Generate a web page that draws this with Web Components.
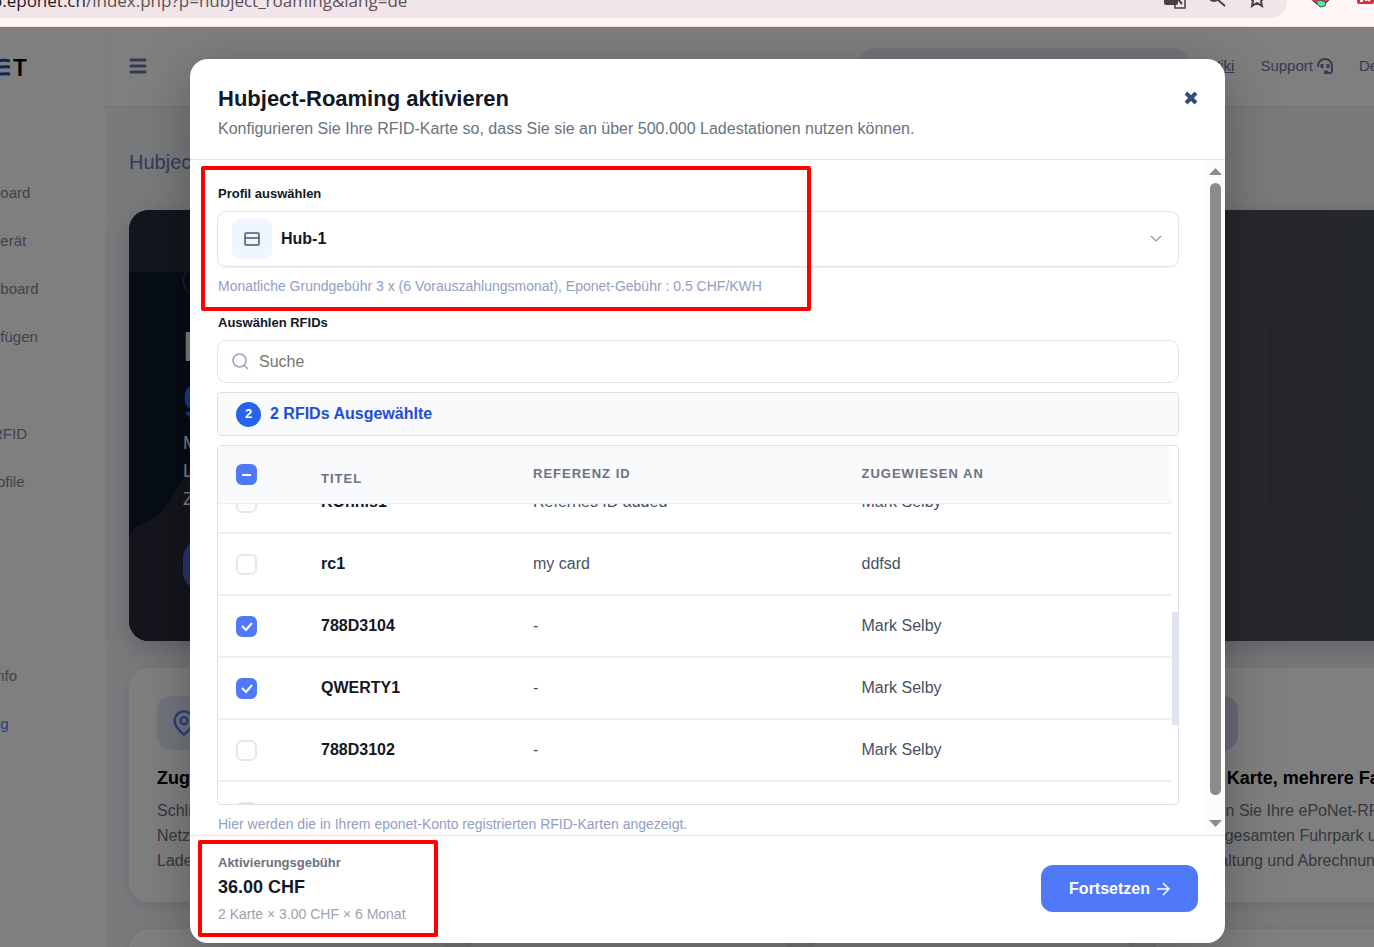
<!DOCTYPE html>
<html lang="de">
<head>
<meta charset="UTF-8">
<meta name="viewport" content="width=device-width, initial-scale=1">
<title>Hubject-Roaming</title>
<style>
  :root {
    --color-blue: #4f79f8;
    --color-ink: #111827;
    --color-grey: #6b7280;
    --color-hint: #929ec3;
    --color-line: #dfe2ea;
  }

  body {
    margin: 0;
    height: 100vh;
    overflow: hidden;
    display: flex;
    flex-direction: column;
    font-family: "Liberation Sans", Arial, sans-serif;
    color: var(--color-ink);
  }
</style>
</head>
<body>
<browser-bar></browser-bar>
<app-shell>
  <app-sidebar slot="sidebar"></app-sidebar>
  <app-topbar slot="topbar"></app-topbar>
  <hero-banner slot="hero"></hero-banner>
  <feature-card slot="cards">
    <svg slot="icon" width="28" height="28" viewBox="0 0 24 24" fill="none" stroke="#4f79f8" stroke-width="2"><path d="M20 10c0 6-8 12-8 12s-8-6-8-12a8 8 0 0 1 16 0z"/><circle cx="12" cy="10" r="3"/></svg>
    <span slot="title">Zug</span>
    Schli<br>Netz<br>Lade
  </feature-card>
  <feature-card slot="cards"></feature-card>
  <feature-card slot="cards"></feature-card>
  <feature-card slot="cards" tint="violet">
    <span slot="title">Eine Karte, mehrere Fahrzeuge</span>
    Nutzen Sie Ihre ePoNet-RFID<br>Ihren gesamten Fuhrpark und<br>Verwaltung und Abrechnung
  </feature-card>
  <feature-card slot="cards"></feature-card>
  <feature-card slot="cards"></feature-card>
  <feature-card slot="cards"></feature-card>
  <feature-card slot="cards"></feature-card>

  <roaming-modal slot="modal">
    <h2 slot="title">Hubject-Roaming aktivieren</h2>
    <p slot="subtitle">Konfigurieren Sie Ihre RFID-Karte so, dass Sie sie an über 500.000 Ladestationen nutzen können.</p>
    <profile-select></profile-select>
    <rfid-picker></rfid-picker>
    <activation-fee slot="footer"></activation-fee>
  </roaming-modal>
</app-shell>

<script>
// Attaches an open shadow root filled from a template string
class BaseElement extends HTMLElement {
  constructor() {
    super();
    const template = document.createElement('template');
    template.innerHTML = `<style>*, ::before { box-sizing: border-box; } h1, h2, h3, p { margin: 0; } :host { display: block; }</style>` + this.constructor.html;
    this.attachShadow({ mode: 'open' });
    this.shadowRoot.appendChild(template.content.cloneNode(true));
  }
}

class BrowserBar extends BaseElement {
  static html = `
    <style>
      :host {
        height: 27px;
        flex: none;
        overflow: hidden;
        display: flex;
        align-items: flex-end;
        background: #fff6f5;
        border-bottom: 1px solid #f3d9dd;
        box-sizing: border-box;
      }
      .address {
        flex: 1;
        height: 34px;
        margin: 0 24px 8px -8px;
        padding-right: 21px;
        display: flex;
        align-items: center;
        gap: 22px;
        border-radius: 0 17px 17px 0;
        background: #f2e5e9;
      }
      .url {
        flex: 1;
        font: 17px/24px "Open Sans", "Noto Sans", sans-serif;
        color: #5c5054;
        white-space: nowrap;
      }
      .url b {
        font-weight: normal;
        color: #1f1a1c;
      }
      .extensions {
        height: 34px;
        margin-bottom: 8px;
        display: flex;
        align-items: center;
        gap: 26px;
      }
      svg {
        margin-bottom: 5px;
      }
    </style>
    <div class="address">
      <span class="url"><b>o.eponet.ch</b>/index.php?p=hubject_roaming&amp;lang=de</span>
      <svg width="22" height="20" viewBox="0 0 22 20"><rect x="0" y="3" width="14" height="13" rx="2" fill="#4a3f43"/><path d="M12 7h9v12h-10v-3" fill="none" stroke="#4a3f43" stroke-width="1.500"/><path d="M13 9l5 6" stroke="#4a3f43" stroke-width="2"/></svg>
      <svg width="18" height="18" viewBox="0 0 18 18" fill="none" stroke="#4a3f43" stroke-width="2"><circle cx="6" cy="6" r="5"/><path d="M10 10l7 6"/></svg>
      <svg width="18" height="18" viewBox="0 0 18 18" fill="none" stroke="#4a3f43" stroke-width="2"><path d="M9 1l2 5 6 1-4 4 1 5-5-3-5 3 1-5-4-4 6-1z"/></svg>
    </div>
    <div class="extensions">
      <svg width="20" height="18" viewBox="0 0 20 18"><path d="M1 1h17v9l-4 4h-8l-4-3z" fill="#f8315d" stroke="#4a3030"/><path d="M5 12l4-2 6 2-1 4-5 1z" fill="#5fe3a8" stroke="#2c5a48"/></svg>
      <svg width="17" height="18" viewBox="0 0 17 18"><rect y="0" width="17" height="14" rx="2" fill="#e52b3f"/><path d="M4 4v7h2M9 4v7M13 6l-3 3 3 2" stroke="#fff" stroke-width="2" fill="none"/></svg>
    </div>
  `;
}

class AppShell extends BaseElement {
  static html = `
    <style>
      :host {
        flex: 1;
        min-height: 0;
        display: grid;
        grid-template: 79px minmax(0, 1fr) / 105px minmax(0, 1fr);
        position: relative;
        overflow: hidden;
        background: #f1f4f8;
      }
      .sidebar {
        grid-row: 1 / 3;
        background: #fff;
      }
      .topbar {
        background: #fff;
        box-shadow: 0 1px 2px rgba(60, 70, 100, 0.08);
      }
      /* the content runs on past the right edge of the window */
      main {
        width: calc(100% + 121px);
        padding: 42px 24px 0;
      }
      h1 {
        margin: 0 0 34px;
        font-size: 20px;
        line-height: 28px;
        font-weight: normal;
        color: #6577b4;
      }
      .cards {
        display: grid;
        grid-template-columns: repeat(4, minmax(0, 1fr));
        gap: 27px;
        margin-top: 27px;
      }
      .overlay {
        position: absolute;
        inset: 0;
        padding: 32px 149px 4px 190px;
        display: flex;
        background: rgba(0, 0, 0, 0.5);
      }
      ::slotted(roaming-modal) {
        flex: 1;
        min-width: 0;
      }
    </style>
    <div class="sidebar"><slot name="sidebar"></slot></div>
    <div class="topbar"><slot name="topbar"></slot></div>
    <main>
      <h1>Hubject</h1>
      <slot name="hero"></slot>
      <div class="cards"><slot name="cards"></slot></div>
    </main>
    <div class="overlay"><slot name="modal"></slot></div>
  `;
}

class AppSidebar extends BaseElement {
  static html = `
    <style>
      :host {
        overflow: hidden;
      }
      .logo {
        height: 79px;
        margin-left: -8px;
        display: flex;
        align-items: center;
        gap: 3px;
        font: bold 23px/24px Lato, sans-serif;
        color: #000;
      }
      nav {
        margin: 63px 0 0 -8px;
      }
      ul {
        list-style: none;
        margin: 0 0 49px;
        padding: 0;
      }
      ul.wide {
        margin-bottom: 146px;
      }
      a {
        display: block;
        font-size: 15px;
        line-height: 48px;
        white-space: pre;
        text-decoration: none;
        color: #78869f;
      }
      a.active {
        color: #4f79f8;
      }
    </style>
    <div class="logo">
      <svg width="18" height="18" viewBox="0 0 18 18" fill="none" stroke="#1f4fae" stroke-width="3"><path d="M0 2c6 2 12-1 18 1M0 9c6 1 12-1 18 0M0 16c6 1 12-1 18 0"/></svg>
      <span>T</span>
    </div>
    <nav>
      <ul>
        <li><a href="#">board</a></li>
        <li><a href="#">gerät</a></li>
        <li><a href="#">&nbsp;&nbsp;board</a></li>
        <li><a href="#">ufügen</a></li>
      </ul>
      <ul class="wide">
        <li><a href="#">RFID</a></li>
        <li><a href="#">rofile</a></li>
      </ul>
      <ul>
        <li><a href="#">Info</a></li>
        <li><a href="#" class="active">ng</a></li>
      </ul>
    </nav>
  `;
}

class AppTopbar extends BaseElement {
  static html = `
    <style>
      :host {
        width: calc(100% + 40px);
        height: 79px;
        padding: 0 0 2px 24px;
        box-sizing: border-box;
        display: flex;
        align-items: center;
        gap: 26px;
        font-size: 15px;
        line-height: 20px;
      }
      button {
        padding: 0;
        border: 0;
        background: none;
        display: flex;
      }
      .search {
        width: 332px;
        height: 36px;
        margin: 0 -10px 0 auto;
        border-radius: 18px;
        background: #e9edf7;
      }
      a {
        color: #6b76a0;
        display: flex;
        align-items: center;
        gap: 4px;
        text-decoration: none;
      }
      a.wiki {
        text-decoration: underline;
      }
    </style>
    <button aria-label="Menü">
      <svg width="18" height="18" viewBox="0 0 18 18" stroke="#6576a6" stroke-width="3" stroke-linecap="round"><path d="M2 3h14M2 9h14M2 15h14"/></svg>
    </button>
    <div class="search"></div>
    <a class="wiki" href="#">Wiki</a>
    <a href="#">Support
      <svg width="16" height="16" viewBox="0 0 16 16" fill="none" stroke="#6b76a0" stroke-width="2"><path d="M1 9V8a7 7 0 0 1 14 0v5a2 2 0 0 1-2 2H8"/><path d="M5 6v4M11 6v4" stroke-width="3"/><path d="M7 14h4" stroke-width="3"/></svg></a>
    <a href="#">Deutsch</a>
  `;
}

class HeroBanner extends BaseElement {
  static html = `
    <style>
      :host {
        display: grid;
        border-radius: 20px;
        overflow: hidden;
        background: linear-gradient(90deg, #0f1a2c, #0f1a2c 25%, #484d58 85%, #4a4f5a);
        color: #fff;
        box-shadow: 0 8px 24px rgba(15, 23, 42, 0.2);
      }
      .scene, .copy {
        grid-area: 1 / 1;
      }
      .scene {
        width: 100%;
        height: 100%;
      }
      .copy {
        padding: 54px 54px 51px;
      }
      .pill {
        width: 200px;
        height: 34px;
        border: 1px solid #46506a;
        border-radius: 17px;
      }
      h2 {
        margin: 25px 0 10px;
        font-size: 42px;
        line-height: 48px;
      }
      h2 span {
        color: #3b76f6;
      }
      p {
        font-size: 18px;
        line-height: 28px;
      }
      .action {
        width: 200px;
        height: 50px;
        margin-top: 27px;
        border-radius: 18px;
        background: #4f69df;
      }
    </style>
    <svg class="scene" viewBox="0 0 1342 431" preserveAspectRatio="none">
      <path d="M0 0h400v62H0z" fill="#252c3c"/>
      <path d="M0 431V326l5-8 22-11q12-10 32-47h200v171z" fill="#2a2d3a"/>
      <path d="M1096 0h46l-6 431h-40z" fill="#4d5158"/>
    </svg>
    <div class="copy">
      <div class="pill"></div>
      <h2>E<br><span>g</span></h2>
      <p>M<br>L<br>Z</p>
      <div class="action"></div>
    </div>
  `;
}

class FeatureCard extends BaseElement {
  static html = `
    <style>
      :host {
        min-height: 234px;
        padding: 28px;
        box-sizing: border-box;
        border-radius: 20px;
        background: #fff;
        box-shadow: 0 3px 12px rgba(30, 40, 80, 0.1);
        white-space: nowrap;
      }
      .tile {
        width: 54px;
        height: 54px;
        display: grid;
        place-items: center;
        border-radius: 14px;
        background: #e7ebfb;
      }
      :host([tint="violet"]) .tile {
        background: #d9d3f3;
      }
      h3 {
        margin: 16px 0 8px;
        font-size: 18px;
        line-height: 24px;
        color: #000;
      }
      p {
        font-size: 16px;
        line-height: 25px;
        color: #6b7280;
      }
    </style>
    <div class="tile"><slot name="icon"></slot></div>
    <h3><slot name="title"></slot></h3>
    <p><slot></slot></p>
  `;
}

class RoamingModal extends BaseElement {
  static html = `
    <style>
      :host {
        display: flex;
        flex-direction: column;
        border-radius: 18px;
        background: #fff;
        box-shadow: 0 12px 56px rgba(0, 0, 0, 0.28);
      }
      header {
        padding: 26px 27px 18px 28px;
        display: flex;
        justify-content: space-between;
        align-items: flex-start;
        border-bottom: 1px solid var(--color-line);
      }
      ::slotted(h2) {
        margin: 0 0 4px;
        font-size: 22px;
        line-height: 28px;
      }
      ::slotted(p) {
        margin: 0;
        font-size: 16px;
        line-height: 24px;
        color: var(--color-grey);
      }
      .close {
        padding: 6px 0;
        border: 0;
        background: none;
        display: flex;
      }
      .body {
        flex: 1;
        min-height: 0;
        display: flex;
      }
      .content {
        flex: 1;
        min-width: 0;
        padding: 24px 27px 0;
        overflow: hidden;
      }
      footer {
        border-top: 1px solid var(--color-line);
      }
    </style>
    <header>
      <div>
        <slot name="title"></slot>
        <slot name="subtitle"></slot>
      </div>
      <button class="close" aria-label="Schließen">
        <svg width="14" height="14" viewBox="0 0 14 14" stroke="#364a7d" stroke-width="4"><path d="M2 2l10 10M12 2L2 12"/></svg>
      </button>
    </header>
    <div class="body">
      <div class="content"><slot></slot></div>
      <scroll-rail></scroll-rail>
    </div>
    <footer><slot name="footer"></slot></footer>
  `;
}

class ScrollRail extends BaseElement {
  static html = `
    <style>
      :host {
        width: 19px;
        padding: 8px 0;
        box-sizing: border-box;
        display: flex;
        flex-direction: column;
        align-items: center;
        gap: 8px;
        background: #fcfcfc;
      }
      svg {
        flex: none;
      }
      .track {
        flex: 1;
        width: 11px;
        padding-bottom: 17px;
      }
      .thumb {
        height: 100%;
        border-radius: 6px;
        background: #8b8b8b;
      }
    </style>
    <svg width="13" height="7" viewBox="0 0 13 7"><path d="M0 7l6.500-7L13 7z" fill="#8b8b8b"/></svg>
    <div class="track"><div class="thumb"></div></div>
    <svg width="13" height="7" viewBox="0 0 13 7"><path d="M0 0l6.500 7L13 0z" fill="#8b8b8b"/></svg>
  `;
}

// Red frame that points out the area around it
class MarkFrame extends BaseElement {
  static html = `
    <style>
      :host {
        position: absolute;
        box-sizing: border-box;
        border: 4px solid #f00;
        border-radius: 2px;
        pointer-events: none;
      }
    </style>
  `;
}

class ProfileSelect extends BaseElement {
  static html = `
    <style>
      :host {
        position: relative;
        margin-bottom: 17px;
      }
      label {
        display: block;
        padding-left: 1px;
        font-size: 13px;
        line-height: 20px;
        font-weight: bold;
      }
      .box {
        height: 56px;
        margin: 7px 0 9px;
        padding: 0 16px 0 14px;
        display: flex;
        align-items: center;
        gap: 9px;
        border: 1px solid #e3e5e9;
        border-radius: 9px;
        box-shadow: 0 1px 2px rgba(0, 0, 0, 0.06);
      }
      .tile {
        width: 40px;
        height: 40px;
        display: grid;
        place-items: center;
        border-radius: 8px;
        background: #eff6ff;
      }
      select {
        flex: 1;
        padding: 0;
        border: 0;
        appearance: none;
        background: none;
        font: bold 16px/24px "Liberation Sans", Arial, sans-serif;
        color: var(--color-ink);
      }
      p {
        padding-left: 1px;
        font-size: 14px;
        line-height: 20px;
        color: var(--color-hint);
      }
      mark-frame {
        top: -18px;
        left: -16px;
        width: 610px;
        height: 145px;
      }
    </style>
    <label for="profile">Profil auswählen</label>
    <div class="box">
      <span class="tile">
        <svg width="16" height="14" viewBox="0 0 16 14" fill="none" stroke="#4b5563" stroke-width="1.500"><rect x="1" y="1" width="14" height="12" rx="1"/><path d="M1 6h14"/></svg>
      </span>
      <select id="profile"><option>Hub-1</option></select>
      <svg width="12" height="8" viewBox="0 0 12 8" fill="none" stroke="#9ca3af" stroke-width="1.500"><path d="M1 1l5 5 5-5"/></svg>
    </div>
    <p>Monatliche Grundgebühr 3 x (6 Vorauszahlungsmonat), Eponet-Gebühr : 0.5 CHF/KWH</p>
    <mark-frame></mark-frame>
  `;
}

class RfidPicker extends BaseElement {
  static html = `
    <style>
      label {
        display: block;
        padding-left: 1px;
        font-size: 13px;
        line-height: 20px;
        font-weight: bold;
      }
      .search {
        height: 43px;
        margin: 7px 0 9px;
        padding: 0 14px;
        display: flex;
        align-items: center;
        gap: 10px;
        border: 1px solid #e3e5e9;
        border-radius: 9px;
      }
      input {
        flex: 1;
        padding: 0;
        border: 0;
        background: none;
        font: 16px/24px "Liberation Sans", Arial, sans-serif;
      }
      input::placeholder {
        color: #757575;
      }
      .selection {
        height: 44px;
        margin-bottom: 9px;
        padding: 0 18px;
        display: flex;
        align-items: center;
        gap: 9px;
        border: 1px solid #dce1e8;
        border-radius: 4px;
        background: #f9fafc;
        font-size: 16px;
        font-weight: bold;
        color: #1d4ed8;
      }
      .count {
        width: 25px;
        height: 25px;
        border-radius: 50%;
        background: #2563eb;
        color: #fff;
        font-size: 13px;
        line-height: 24px;
        text-align: center;
      }
      p {
        margin-top: 9px;
        padding-left: 1px;
        font-size: 14px;
        line-height: 20px;
        color: var(--color-hint);
      }
    </style>
    <label for="search">Auswählen RFIDs</label>
    <div class="search">
      <svg width="17" height="17" viewBox="0 0 17 17" fill="none" stroke="#98a1b3" stroke-width="1.500"><circle cx="7.500" cy="7.500" r="6.500"/><path d="M12 12l4 4"/></svg>
      <input id="search" type="text" placeholder="Suche">
    </div>
    <div class="selection"><span class="count">2</span><span>2 RFIDs Ausgewählte</span></div>
    <rfid-table></rfid-table>
    <p>Hier werden die in Ihrem eponet-Konto registrierten RFID-Karten angezeigt.</p>
  `;
}

class TickBox extends BaseElement {
  static html = `
    <style>
      :host {
        width: 21px;
        height: 21px;
        display: grid;
      }
      input, svg {
        grid-area: 1 / 1;
        width: 21px;
        height: 21px;
        margin: 0;
      }
      input {
        appearance: none;
        border: 2px solid #e5e7eb;
        border-radius: 6px;
        background: #fff;
      }
      input:checked, input:indeterminate {
        border-color: var(--color-blue);
        background: var(--color-blue);
      }
      svg {
        visibility: hidden;
        pointer-events: none;
        fill: none;
        stroke: #fff;
        stroke-width: 2;
      }
      input:checked ~ .tick, input:indeterminate ~ .dash {
        visibility: visible;
      }
    </style>
    <input type="checkbox">
    <svg class="tick" viewBox="0 0 21 21"><path d="M6 10l4 4 6-7"/></svg>
    <svg class="dash" viewBox="0 0 21 21"><path d="M6 11h9"/></svg>
  `;

  connectedCallback() {
    const input = this.shadowRoot.querySelector('input');
    input.checked = this.hasAttribute('checked');
    input.indeterminate = this.hasAttribute('mixed');
    input.setAttribute('aria-label', this.getAttribute('label') || 'Karte');
  }
}

const cards = [
  { title: 'ROhnis1', reference: 'Refernes ID added', owner: 'Mark Selby' },
  { title: 'rc1', reference: 'my card', owner: 'ddfsd' },
  { title: '788D3104', reference: '-', owner: 'Mark Selby', checked: true },
  { title: 'QWERTY1', reference: '-', owner: 'Mark Selby', checked: true },
  { title: '788D3102', reference: '-', owner: 'Mark Selby' },
  { title: '', reference: '', owner: '' },
];

class RfidTable extends BaseElement {
  static html = `
    <style>
      :host {
        height: 360px;
        box-sizing: border-box;
        display: flex;
        border: 1px solid #dce1e8;
        border-radius: 4px;
        overflow: hidden;
      }
      .scroller {
        flex: 1;
        overflow: hidden;
      }
      table {
        width: 100%;
        table-layout: fixed;
        border-collapse: separate;
        border-spacing: 0;
        text-align: left;
      }
      th, td {
        padding: 0 18px;
      }
      thead th {
        position: sticky;
        top: 0;
        z-index: 1;
        height: 58px;
        padding-bottom: 2px;
        border-bottom: 1px solid #eceef2;
        background: #f9fafc;
        font-size: 13px;
        line-height: 20px;
        letter-spacing: 1px;
        text-transform: uppercase;
        color: var(--color-grey);
      }
      thead th.low {
        padding-top: 10px;
      }
      thead th:first-child {
        padding-bottom: 0;
        width: 85px;
      }
      thead th:nth-child(2) {
        width: 212px;
      }
      tbody td, tbody th {
        height: 62px;
        border-bottom: 2px solid #eeeff5;
        font-size: 16px;
        line-height: 24px;
        color: #475063;
      }
      tbody th {
        color: var(--color-ink);
      }
      .lane {
        width: 6px;
        display: grid;
        grid-template-rows: 166fr 113fr 79fr;
      }
      .lane i {
        grid-row: 2;
        background: #e0e4f2;
      }
    </style>
    <div class="scroller">
      <table>
        <thead>
          <tr>
            <th><tick-box mixed label="Alle"></tick-box></th>
            <th class="low">Titel</th>
            <th>Referenz ID</th>
            <th>Zugewiesen an</th>
          </tr>
        </thead>
        <tbody></tbody>
      </table>
    </div>
    <div class="lane"><i></i></div>
  `;

  connectedCallback() {
    this.shadowRoot.querySelector('tbody').innerHTML = cards.map((card) => `
      <tr>
        <td><tick-box label="${card.title}" ${card.checked ? 'checked' : ''}></tick-box></td>
        <th scope="row">${card.title}</th>
        <td>${card.reference}</td>
        <td>${card.owner}</td>
      </tr>
    `).join('');
    this.shadowRoot.querySelector('.scroller').scrollTop = 32;
  }
}

class ActivationFee extends BaseElement {
  static html = `
    <style>
      :host {
        position: relative;
        padding: 17px 27px 19px 28px;
        display: flex;
        justify-content: space-between;
        align-items: center;
      }
      .label, .detail {
        font-size: 14px;
        line-height: 20px;
      }
      .label {
        font-size: 13px;
        font-weight: bold;
        color: var(--color-grey);
      }
      .total {
        margin: 2px 0 5px;
        font-size: 18px;
        line-height: 24px;
        font-weight: bold;
      }
      .detail {
        color: #9ca3af;
      }
      button {
        height: 47px;
        padding: 0 28px;
        display: flex;
        align-items: center;
        gap: 6px;
        border: 0;
        border-radius: 12px;
        background: var(--color-blue);
        color: #fff;
        font: bold 16px/24px "Liberation Sans", Arial, sans-serif;
      }
      mark-frame {
        top: 4px;
        left: 8px;
        width: 240px;
        height: 97px;
      }
    </style>
    <div>
      <div class="label">Aktivierungsgebühr</div>
      <div class="total">36.00 CHF</div>
      <div class="detail">2 Karte × 3.00 CHF × 6 Monat</div>
    </div>
    <button>Fortsetzen
      <svg width="14" height="14" viewBox="0 0 14 14" fill="none" stroke="#fff" stroke-width="1.500"><path d="M1 7h12M7 1l6 6-6 6"/></svg>
    </button>
    <mark-frame></mark-frame>
  `;
}

customElements.define('browser-bar', BrowserBar);
customElements.define('app-shell', AppShell);
customElements.define('app-sidebar', AppSidebar);
customElements.define('app-topbar', AppTopbar);
customElements.define('hero-banner', HeroBanner);
customElements.define('feature-card', FeatureCard);
customElements.define('scroll-rail', ScrollRail);
customElements.define('mark-frame', MarkFrame);
customElements.define('tick-box', TickBox);
customElements.define('rfid-table', RfidTable);
customElements.define('profile-select', ProfileSelect);
customElements.define('rfid-picker', RfidPicker);
customElements.define('activation-fee', ActivationFee);
customElements.define('roaming-modal', RoamingModal);
</script>
</body>
</html>
